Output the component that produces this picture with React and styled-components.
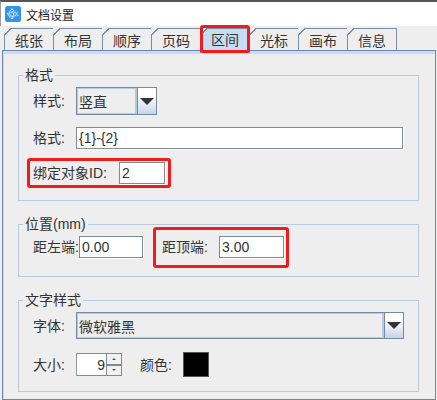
import React from "react";
import styled, { createGlobalStyle } from "styled-components";

const GlobalStyle = createGlobalStyle`
  html, body {
    margin: 0;
    padding: 0;
    background: #eeeeee;
  }
  * {
    box-sizing: border-box;
  }
`;

const Window = styled.div`
  width: 437px;
  height: 400px;
  overflow: hidden;
  background: #eeeeee;
  color: #333333;
  font-family: "Liberation Sans", "Noto Sans CJK SC", sans-serif;
  font-size: 14px;
`;

const TitleBar = styled.div`
  display: flex;
  align-items: center;
  gap: 5px;
  height: 26px;
  padding-left: 4px;
  background: #ffffff;
  border-top: 2px solid #555555;
  border-left: 1px solid #9a9a9a;
  font-size: 12px;
  color: #222222;
`;

const TabStrip = styled.div`
  display: flex;
  align-items: flex-start;
  height: 24px;
  padding: 2px 0 0 5px;
`;

const Tab = styled.div`
  position: relative;
  z-index: ${(p) => (p.$active ? 1 : 0)};
  display: flex;
  align-items: ${(p) => (p.$active ? "flex-start" : "center")};
  justify-content: center;
  width: 50px;
  height: ${(p) => (p.$active ? "25px" : "22px")};
  margin-left: -1px;
  background: ${(p) => (p.$active ? "#c6dcf3" : "#eeeeee")};
  border: 1px solid #7c8ca3;
  border-bottom: none;

  &::before {
    content: "";
    position: absolute;
    top: -1px;
    left: -1px;
    width: 7px;
    height: 7px;
    background: linear-gradient(135deg, #eeeeee 0 44%, #7c8ca3 44% 58%, transparent 58%);
  }
`;

const TabMarker = styled.div`
  position: absolute;
  top: -4px;
  left: -1px;
  right: -1px;
  bottom: 0;
  border: 3px solid #f01c1c;
  border-radius: 3px;
`;

const Panel = styled.div`
  width: 434px;
  height: 350px;
  margin-left: 2px;
  padding: 14px 14px 0 15px;
  border: 1px solid #6a86b8;
  box-shadow: inset 1px 3px 0 #c9dcf2;
`;

const Group = styled.fieldset`
  width: 401px;
  margin: ${(p) => (p.$first ? "0" : "13px")} 0 0 0;
  padding: 2px 14px ${(p) => p.$bottom}px 14px;
  border: 1px solid #b6cbe2;
  min-width: 0;
`;

const Legend = styled.legend`
  margin-left: -10px;
  padding: 0 2px;
  height: 20px;
  line-height: 20px;
  font-size: 14px;
`;

const Stack = styled.div`
  display: flex;
  flex-direction: column;
  align-items: flex-start;
  gap: ${(p) => p.$gap || "12px"};
`;

const Row = styled.div`
  display: flex;
  align-items: center;
  height: ${(p) => p.$height};
`;

const Label = styled.span`
  flex: none;
  width: ${(p) => p.$width};
  margin-left: ${(p) => p.$left || "0"};
  line-height: 20px;
  white-space: nowrap;
`;

const Field = styled.div`
  flex: none;
  display: flex;
  align-items: center;
  width: ${(p) => p.$width};
  height: 22px;
  padding-left: 2px;
  background: #ffffff;
  border: 1px solid #7d8a98;
  box-shadow: 1px 1px 0 #ffffff;
`;

const Marked = styled.div`
  flex: none;
  display: flex;
  align-items: center;
  height: ${(p) => p.$height};
  margin: ${(p) => p.$margin};
  padding: ${(p) => p.$padding};
  border: 3px solid #f01c1c;
  border-radius: 3px;
`;

const Select = styled.div`
  flex: none;
  display: flex;
  width: ${(p) => p.$width};
  height: ${(p) => p.$height};
  border: 1px solid #7589a0;
`;

const SelectValue = styled.div`
  flex: 1;
  display: flex;
  align-items: center;
  padding-left: 1px;
  border: 1px solid #b4cbe2;
  border-right-width: 2px;
`;

const ArrowButton = styled.div`
  flex: none;
  display: flex;
  align-items: center;
  justify-content: center;
  width: 19px;
  border-left: 1px solid #7589a0;
  background: linear-gradient(#ffffff 30%, #c4d5e8);
`;

const Arrow = styled.div`
  width: 0;
  height: 0;
  border-left: 7px solid transparent;
  border-right: 7px solid transparent;
  border-top: 7px solid #333333;
`;

const Spinner = styled.div`
  flex: none;
  display: flex;
  width: 46px;
  height: 23px;
  border: 1px solid #7d8a98;
  border-left-color: #8c98a6;
  background: #ffffff;
`;

const SpinnerValue = styled.div`
  flex: 1;
  display: flex;
  align-items: center;
  justify-content: flex-end;
  padding-right: 1px;
  font-size: 14px;
`;

const SpinnerButtons = styled.div`
  flex: none;
  display: flex;
  flex-direction: column;
  width: 15px;
  border-left: 1px solid #7d8a98;
`;

const SpinnerButton = styled.div`
  flex: 1;
  display: flex;
  align-items: center;
  justify-content: center;
  background: #f1f1f1;

  &:first-child {
    border-bottom: 2px solid #7d8a98;
  }
`;

const SmallArrow = styled.div`
  width: 0;
  height: 0;
  border-left: 2px solid transparent;
  border-right: 2px solid transparent;
  border-${(p) => (p.$up ? "bottom" : "top")}: 2px solid #555555;
`;

const Swatch = styled.div`
  flex: none;
  width: 26px;
  height: 25px;
  background: #000000;
  border: 1px solid #555555;
`;

const tabs = ["纸张", "布局", "顺序", "页码", "区间", "光标", "画布", "信息"];

const AppIcon = () => (
  <svg width="16" height="16" viewBox="0 0 16 16">
    <rect width="16" height="16" rx="2.5" fill="#2f93f2" />
    <g fill="none" stroke="#ffffff" strokeWidth="1.1" strokeDasharray="1.2 0.8">
      <path d="M7 3 L11.5 8 L7 13 L2.5 8 Z" />
      <path d="M7 5.4 L9.3 8 L7 10.6 L4.7 8 Z" />
    </g>
    <circle cx="12.4" cy="6.4" r="1" fill="#8bd24a" />
    <circle cx="12.6" cy="9.4" r="1" fill="#f4c430" />
  </svg>
);

const App = () => {
  return (
    <Window>
      <GlobalStyle />
      <TitleBar>
        <AppIcon />
        <span>文档设置</span>
      </TitleBar>
      <TabStrip>
        {tabs.map((tab) => (
          <Tab key={tab} $active={tab === "区间"}>
            {tab}
            {tab === "区间" && <TabMarker />}
          </Tab>
        ))}
      </TabStrip>
      <Panel>
        <Group $first $bottom={12}>
          <Legend>格式</Legend>
          <Stack>
            <Row $height="28px">
              <Label $width="43px">样式:</Label>
              <Select $width="81px" $height="28px">
                <SelectValue>竖直</SelectValue>
                <ArrowButton>
                  <Arrow />
                </ArrowButton>
              </Select>
            </Row>
            <Row $height="22px">
              <Label $width="43px">格式:</Label>
              <Field $width="327px">{"{1}-{2}"}</Field>
            </Row>
            <Marked $height="30px" $margin="-3px 0 0 -6px" $padding="0 3px">
              <Label $width="86px">绑定对象ID:</Label>
              <Field $width="46px">2</Field>
            </Marked>
          </Stack>
        </Group>
        <Group $bottom={18}>
          <Legend>位置(mm)</Legend>
          <Row $height="22px">
            <Label $width="46px">距左端:</Label>
            <Field $width="64px">0.00</Field>
            <Marked $height="41px" $margin="-9px 0 -9px 10px" $padding="0 2px 0 6px">
              <Label $width="57px">距顶端:</Label>
              <Field $width="65px">3.00</Field>
            </Marked>
          </Row>
        </Group>
        <Group $bottom={14}>
          <Legend>文字样式</Legend>
          <Stack $gap="13px">
            <Row $height="27px">
              <Label $width="43px">字体:</Label>
              <Select $width="328px" $height="27px">
                <SelectValue>微软雅黑</SelectValue>
                <ArrowButton>
                  <Arrow />
                </ArrowButton>
              </Select>
            </Row>
            <Row $height="25px">
              <Label $width="43px">大小:</Label>
              <Spinner>
                <SpinnerValue>9</SpinnerValue>
                <SpinnerButtons>
                  <SpinnerButton>
                    <SmallArrow $up />
                  </SpinnerButton>
                  <SpinnerButton>
                    <SmallArrow />
                  </SpinnerButton>
                </SpinnerButtons>
              </Spinner>
              <Label $width="43px" $left="18px">颜色:</Label>
              <Swatch />
            </Row>
          </Stack>
        </Group>
      </Panel>
    </Window>
  );
};

export default App;
